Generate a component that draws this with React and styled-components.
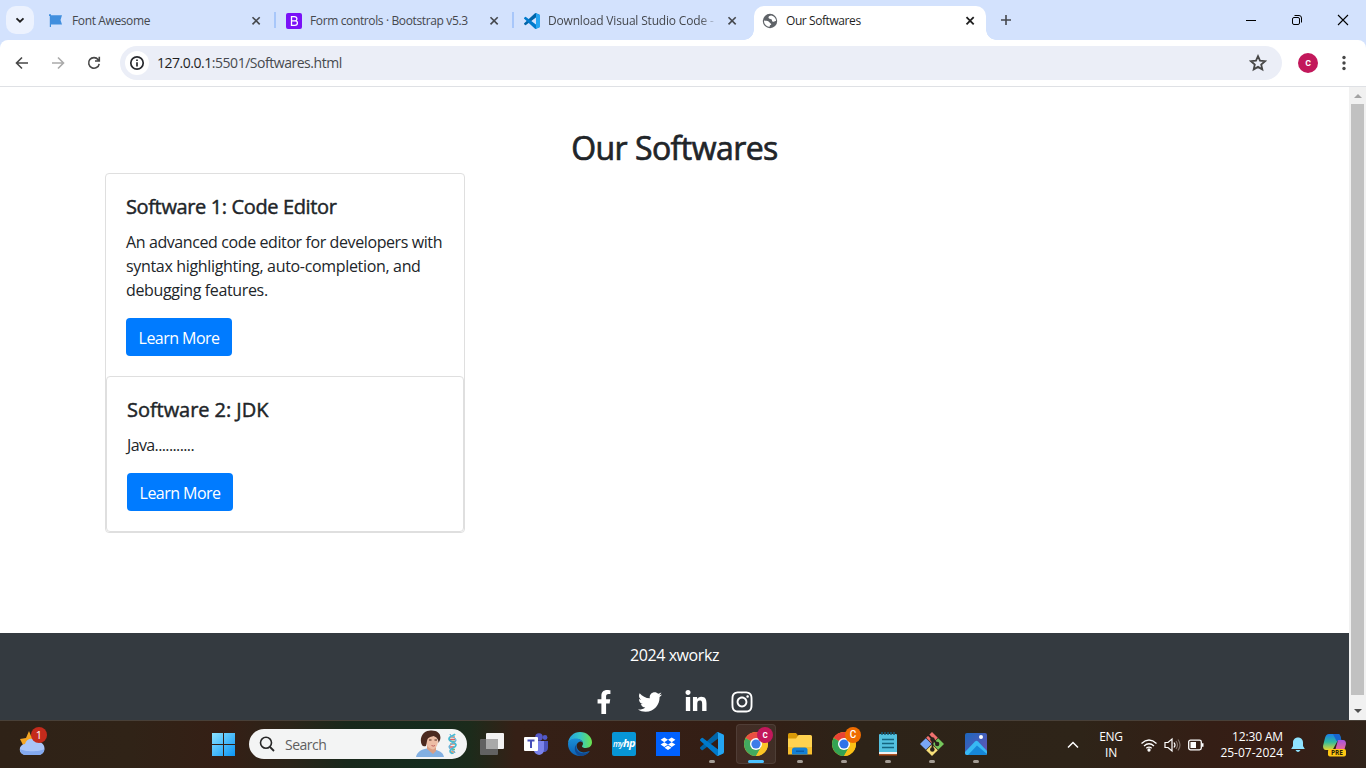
import React from "react";
import styled, { createGlobalStyle, css } from "styled-components";
import { FaFacebookF, FaTwitter, FaLinkedinIn, FaInstagram } from "react-icons/fa";

const Global = createGlobalStyle`
  * { box-sizing: border-box; }
  html, body { margin: 0; padding: 0; }
  body { font-family: "Open Sans", "Noto Sans", sans-serif; background: #fff; overflow: hidden; }
  svg { display: block; flex: none; }
`;

const Screen = styled.div`
  width: 1366px;
  height: 768px;
  display: flex;
  flex-direction: column;
  overflow: hidden;
`;

/* ---------- tab strip ---------- */
const TabStrip = styled.header`
  height: 40px;
  flex: none;
  display: flex;
  background: #d3e2fd;
  padding-left: 6px;
`;
const TabSearch = styled.div`
  width: 28px;
  height: 28px;
  margin: 6px 6px 0 0;
  border-radius: 10px;
  background: #ecf2fe;
  display: grid;
  place-items: center;
`;
const Tab = styled.div`
  position: relative;
  width: 238px;
  height: 40px;
  padding: 1px 14px 0 8px;
  display: flex;
  align-items: center;
`;
const TabIcon = styled.span`
  width: 16px;
  height: 16px;
  margin-right: 8px;
  flex: none;
`;
const TabTitle = styled.span`
  flex: 1;
  font-size: 12px;
  line-height: 16px;
  letter-spacing: ${(p) => p.$track || 0}px;
  color: ${(p) => (p.$active ? "#1f1f1f" : "#45484d")};
  white-space: nowrap;
  ${(p) => p.$fade && css`
    mask-image: linear-gradient(90deg, #000 152px, transparent 170px);
  `}
`;
const TabClose = styled.span`
  width: 16px;
  margin-left: 6px;
`;
const Divider = styled.i`
  position: absolute;
  right: 2px;
  top: 12px;
  width: 2px;
  height: 16px;
  background: #a8c7fa;
`;
const ActiveTab = styled(Tab)`
  width: 232px;
  height: 34px;
  margin-top: 6px;
  padding: 0 8px 5px;
  background: #fff;
  border-radius: 10px 10px 0 0;
  &::before, &::after {
    content: "";
    position: absolute;
    bottom: 0;
    width: 10px;
    height: 10px;
  }
  &::before { left: -10px; background: radial-gradient(circle at 0 0, transparent 9.5px, #fff 10px); }
  &::after { right: -10px; background: radial-gradient(circle at 100% 0, transparent 9.5px, #fff 10px); }
`;
const NewTab = styled.div`
  width: 28px;
  height: 40px;
  margin-left: 6px;
  display: grid;
  place-items: center;
`;
const WindowButtons = styled.div`
  margin-left: auto;
  display: flex;
  > span { width: 46px; height: 40px; display: grid; place-items: center; }
`;

/* ---------- toolbar ---------- */
const ToolbarBack = styled.div`
  height: 47px;
  flex: none;
  background: #d3e2fd;
`;
const Toolbar = styled.div`
  height: 47px;
  background: #fff;
  border-radius: 8px 8px 0 0;
  border-bottom: 1px solid #dfe1e5;
  display: flex;
  align-items: center;
  padding-left: 4px;
`;
const NavButton = styled.span`
  width: 36px;
  height: 36px;
  display: grid;
  place-items: center;
`;
const Omnibox = styled.div`
  width: 1162px;
  height: 34px;
  margin-left: 8px;
  border-radius: 17px;
  background: #ebeef7;
  display: flex;
  align-items: center;
  padding: 0 15px 0 5px;
`;
const SiteInfo = styled.span`
  width: 24px;
  height: 24px;
  border-radius: 50%;
  background: #fff;
  display: grid;
  place-items: center;
  margin-right: 8px;
`;
const Url = styled.span`
  flex: 1;
  font-size: 14px;
  line-height: 20px;
  letter-spacing: -0.47px;
  color: #474a4f;
  b { font-weight: 400; color: #1f1f1f; }
`;
const Profile = styled.span`
  width: 20px;
  height: 20px;
  margin: 0 16px;
  border-radius: 50%;
  background: #c2185b;
  color: #fff;
  font: 500 11px/19px Roboto, sans-serif;
  text-align: center;
`;

/* ---------- page ---------- */
const Viewport = styled.div`
  height: 633px;
  flex: none;
  display: flex;
`;
const Page = styled.main`
  width: 1349px;
  height: 633px;
  display: flex;
  flex-direction: column;
  color: #212529;
`;
const Content = styled.section`
  height: 546px;
  padding: 40px 105px 0;
`;
const Heading = styled.h2`
  margin: 0 0 8px;
  height: 38px;
  font-size: 32px;
  line-height: 41px;
  font-weight: 400;
  -webkit-text-stroke: 0.7px currentColor;
  letter-spacing: -0.55px;
  text-align: center;
`;
const Card = styled.article`
  width: ${(p) => p.$width};
  border: 1px solid #dfdfdf;
  border-radius: 4px;
  background: #fff;
`;
const CardBody = styled.div`
  padding: 20px;
`;
const CardTitle = styled.h5`
  margin: 0 0 12px;
  font-size: 20px;
  line-height: 25px;
  height: 24px;
  font-weight: 400;
  -webkit-text-stroke: 0.45px currentColor;
  letter-spacing: ${(p) => p.$track}px;
  white-space: nowrap;
`;
const CardText = styled.p`
  margin: 0 0 16px;
  font-size: 16px;
  line-height: 24px;
`;
const Line = styled.span`
  display: block;
  white-space: nowrap;
  letter-spacing: ${(p) => p.$track}px;
`;
const Button = styled.a`
  display: flex;
  align-items: center;
  justify-content: center;
  width: 106px;
  height: 38px;
  padding-top: 1px;
  border-radius: 4px;
  background: #007bff;
  color: #fff;
  font-size: 16px;
  letter-spacing: -0.55px;
  white-space: nowrap;
`;
const Footer = styled.footer`
  height: 87px;
  background: #343a40;
  color: #fff;
  text-align: center;
  font-size: 16px;
  line-height: 24px;
  letter-spacing: -0.42px;
  padding-top: 10px;
`;
const Socials = styled.div`
  display: flex;
  justify-content: center;
  align-items: center;
  gap: 22px;
  height: 24px;
  margin: 23px 4px 0 0;
`;
const Scrollbar = styled.aside`
  width: 17px;
  background: #f1f1f1;
  display: flex;
  flex-direction: column;
  align-items: center;
  justify-content: space-between;
  padding: 7px 0;
`;
const Thumb = styled.i`
  width: 13px;
  height: 591px;
  margin: 1px 0 9px;
  background: #c1c1c1;
`;

/* ---------- taskbar ---------- */
const Taskbar = styled.nav`
  height: 48px;
  flex: none;
  display: flex;
  align-items: center;
  border-top: 1px solid #484038;
  background: linear-gradient(90deg, #2f2217 0, #302317 130px, #351f15 225px, #2b2419 290px, #18281b 350px, #152c1e 430px, #1c2b1b 470px, #352016 515px, #341e15 740px, #2d2318 850px, #2e2418 1080px, #341e15 1210px, #371d15 1270px, #30231a 1366px);
`;
const Weather = styled.div`
  position: relative;
  width: 48px;
  height: 47px;
  margin-right: 153px;
  padding: 10px 0 0 19px;
`;
const Badge = styled.span`
  position: absolute;
  left: 31px;
  top: 6px;
  width: 16px;
  height: 16px;
  border-radius: 50%;
  background: #c42b1c;
  color: #fff;
  font-size: 11px;
  line-height: 15px;
  text-align: center;
`;
const TaskButton = styled.div`
  position: relative;
  width: 44px;
  height: 47px;
  padding-bottom: 1px;
  flex: none;
  display: grid;
  place-items: center;
`;
const Highlight = styled.i`
  position: absolute;
  inset: 3px 2px 4px;
  border-radius: 4px;
  background: #ffffff12;
  border: 1px solid #ffffff14;
`;
const Indicator = styled.i`
  position: absolute;
  bottom: 5px;
  left: 50%;
  transform: translateX(-50%);
  width: ${(p) => (p.$current ? 16 : 6)}px;
  height: 3px;
  border-radius: 2px;
  background: ${(p) => (p.$current ? "#4cc2ff" : "#a39c94")};
`;
const ProfileDot = styled.span`
  position: absolute;
  left: 23px;
  top: 6px;
  width: 16px;
  height: 16px;
  border-radius: 50%;
  background: ${(p) => p.$color};
  color: #fff;
  font: 500 10px/15px Roboto, sans-serif;
  text-align: center;
`;
const SearchBox = styled.div`
  width: 218px;
  height: 30px;
  margin: 0 3px 1px 4px;
  border-radius: 15px;
  background: #f3f4f4;
  display: flex;
  align-items: center;
  padding: 0 7px 0 10px;
  color: #5f5f5f;
  font-size: 14px;
  letter-spacing: -0.5px;
  span { flex: 1; margin-left: 10px; }
`;
const Tray = styled.div`
  margin-left: auto;
  height: 47px;
  display: flex;
  align-items: center;
  color: #fff;
  font-size: 12px;
  line-height: 16px;
`;
const Language = styled.div`
  width: 40px;
  text-align: center;
  letter-spacing: -0.3px;
  margin: 1px 9px 0 12px;
`;
const Clock = styled.div`
  width: 79px;
  margin-right: 8px;
  text-align: right;
  letter-spacing: 0;
  white-space: nowrap;
  span { letter-spacing: -0.15px; }
`;
const Copilot = styled.div`
  width: 26px;
  height: 26px;
  margin: 0 18px 0 17px;
`;

/* ---------- drawings ---------- */
const Cross = ({ color = "#45484d", w = 1.6 }) => (
  <svg width="16" height="16" viewBox="0 0 16 16">
    <path d="M4.5 4.2l7.2 7.2M11.7 4.2l-7.2 7.2" stroke={color} strokeWidth={w} />
  </svg>
);
const VsCode = ({ size }) => (
  <svg width={size} height={size} viewBox="0 0 100 100">
    <path d="M96.5 10.8L75.9.9a6.2 6.2 0 0 0-7.1 1.2L1.3 63.6a4.2 4.2 0 0 0 0 6.2l5.5 5a4.2 4.2 0 0 0 5.3.2L93.4 13.4c2.7-2 6.6-.1 6.600 3.300v-.3a6.250 6.250 0 0 0-3.500-5.600z" fill="#0065a9" />
    <path d="M96.500 89.200l-20.600 9.900a6.200 6.200 0 0 1-7.100-1.200L1.300 36.400a4.200 4.200 0 0 1 0-6.200l5.500-5a4.200 4.200 0 0 1 5.300-.2l81.300 61.600c2.700 2 6.600.1 6.600-3.300v.3a6.250 6.250 0 0 1-3.500 5.600z" fill="#007acc" />
    <path d="M75.900 99.100a6.200 6.200 0 0 1-7.100-1.200c2.300 2.300 6.200.7 6.200-2.600V4.700c0-3.300-3.900-4.900-6.200-2.600a6.200 6.200 0 0 1 7.100-1.200l20.600 9.900a6.250 6.250 0 0 1 3.500 5.600v67.200c0 2.400-1.400 4.600-3.500 5.600z" fill="#24a5f2" />
  </svg>
);
const Flag = () => (
  <svg width="16" height="16" viewBox="0 0 16 16">
    <path d="M1 1.300h2v1h11l-1.500 4.700 1.500 4.500H3v2.500H1.800V3H1z" fill="#418fde" />
  </svg>
);
const BootstrapIcon = () => (
  <svg width="16" height="16" viewBox="0 0 16 16">
    <rect width="16" height="16" rx="2" fill="#7a11f7" />
    <path d="M5.500 3.700v8.600h3.300c1.700 0 2.600-.9 2.600-2.400 0-1.300-.9-2.100-2.300-2.100 1.200-.1 1.800-.9 1.800-1.900 0-1.400-.9-2.200-2.500-2.200zM5.500 7.800h3.600" fill="none" stroke="#fff" strokeWidth="1.300" />
  </svg>
);
const Globe = () => (
  <svg width="16" height="16" viewBox="0 0 16 16">
    <circle cx="8" cy="8" r="7.200" fill="#5f6368" />
    <path d="M9.300 2.400C8 2.300 6.700 3 6.500 4.300c-.1 1.200.9 1.500 1.900 1.700 1.200.2 1.700.8 1.600 1.800-.2 1 1.300 1.100 2.300.6 1-.4 1.500-.1 1.800-.9-.2-2.400-1.800-4.500-4.800-5.100zM2 7.600c1.600.5 3.300 0 4.600.8 1 .7 1 1.600 2 2 .9.300.8 1.400-.1 1.700-.8.3-.6 1.300-1.100 1.800C4.200 13.600 1.900 11 2 7.600z" fill="#fff" />
  </svg>
);
const Chrome = () => (
  <svg width="24" height="24" viewBox="0 0 24 24">
    <circle cx="12" cy="12" r="12" fill="#fbc116" />
    <path d="M12 12L1.610 6A12 12 0 0 1 22.390 6H12z" fill="#e94235" />
    <path d="M12 12L1.610 6A12 12 0 0 0 12 24l5.200-9z" fill="#34a353" />
    <path d="M12 6h10.390A12 12 0 0 1 12 24l5.200-9z" fill="#fbc116" />
    <circle cx="12" cy="12" r="6" fill="#fff" />
    <circle cx="12" cy="12" r="4.600" fill="#2f73e8" />
  </svg>
);
const Edge = () => (
  <svg width="24" height="24" viewBox="0 0 24 24">
    <defs>
      <linearGradient id="edgeTop"><stop offset="0" stopColor="#229ee0" /><stop offset=".5" stopColor="#36c7c5" /><stop offset="1" stopColor="#6be34b" /></linearGradient>
      <linearGradient id="edgeLow" x2="0" y2="1"><stop stopColor="#1b8fd6" /><stop offset="1" stopColor="#0b61b5" /></linearGradient>
    </defs>
    <path d="M0 11C.6 4.800 5.700 0 12 0c7 0 12 5 12 10.300 0 3.700-2.800 5.700-6 5.700-2.400 0-4-.8-4-1.600 0-.6 1-1 1-2.800C15 8.900 12 7 8.500 7 4.500 7 1.200 8.600 0 11z" fill="url(#edgeTop)" />
    <path d="M0 12C0 8.700 3.500 6.500 7.800 6.500c4 0 7.200 2.200 7.200 5 0-1.700-2-2.500-3.500-1.800C8.800 10.800 8 13.400 9 16c1.200 3 4.500 5 8.500 4.300 2-.4 3.600-1.200 4.300-1.200C20 22 16.300 24 12 24 5.200 24 0 18.600 0 12z" fill="url(#edgeLow)" />
    <path d="M8.700 12c-1.800 4 .5 9 6.300 9.300 3 .1 5.700-1.400 6.900-2.400C19.800 22 16.500 24 12.500 24 7.500 23.500 4.700 16 8.700 12z" fill="#12488f" />
  </svg>
);
const WindowsLogo = () => (
  <svg width="24" height="24" viewBox="0 0 24 24">
    <defs><linearGradient id="win" gradientUnits="userSpaceOnUse" x1="1" y1="1" x2="24" y2="24"><stop stopColor="#8be2ff" /><stop offset="1" stopColor="#0a95f5" /></linearGradient></defs>
    <path d="M1 1h11v11H1zM13 1h11v11H13zM1 13h11v11H1zM13 13h11v11H13z" fill="url(#win)" />
  </svg>
);
const TaskView = () => (
  <svg width="24" height="24" viewBox="0 0 24 24">
    <rect x="6" y="1" width="18" height="16" rx="1" fill="#f2f2f2" />
    <rect y="7" width="18" height="16" rx="1" fill="#626262" />
    <path d="M6 7h12v10H6z" fill="#a9a9a9" />
  </svg>
);
const Teams = () => (
  <svg width="24" height="24" viewBox="0 0 24 24">
    <circle cx="15" cy="5" r="3.800" fill="#5558c8" />
    <circle cx="21" cy="5.500" r="2.400" fill="#5059c9" />
    <path d="M16 9h8v7a4 4 0 0 1-6 3.500z" fill="#4b53bc" />
    <path d="M10 9h10v8c0 8-9 7-10 2z" fill="#7b83eb" />
    <rect y="5" width="14" height="14" rx="1" fill="#fff" />
    <path d="M3.500 8.500h7M7 8.500V16" stroke="#464eb8" strokeWidth="2" />
  </svg>
);
const HpTile = styled.span`
  width: 24px;
  height: 24px;
  border-radius: 2px;
  background: #0796d6;
  color: #fff;
  font: italic 600 8px/21px "Open Sans", sans-serif;
  letter-spacing: -0.6px;
  text-align: center;
  b { font-size: 11px; font-weight: 700; }
`;
const Dropbox = () => (
  <svg width="24" height="24" viewBox="0 0 24 24">
    <path fill="#0061fe" d="M0 0h24v24H0z" />
    <path fill="#fff" d="M8.300 5.500l3.700 2.300-3.700 2.400-3.700-2.400zM15.700 5.500l3.700 2.300-3.700 2.400L12 7.800zM8.300 10.200l3.700 2.400-3.700 2.300-3.700-2.300zM15.700 10.200l3.700 2.400-3.700 2.300-3.700-2.300zM12 13.500l3.500 2.300-3.500 2.300-3.500-2.300z" />
  </svg>
);
const Folder = () => (
  <svg width="24" height="24" viewBox="0 0 24 24">
    <path d="M0 2.500q0-1.500 1.500-1.500H8l2 2.500v5H0z" fill="#d99a08" />
    <path d="M0 6.500h8L10.500 3H22.500Q24 3 24 4.500V22H0z" fill="#ffd250" />
    <path d="M0 15h24v7.500H0z" fill="#f8bf2e" />
    <path d="M4 22.500V18q0-2.500 2.500-2.500h10.500q2.500 0 2.500 2.500v4.500z" fill="#1480d4" />
    <path d="M8 18.500h8v1.500H8z" fill="#0b5da8" />
  </svg>
);
const Notepad = () => (
  <svg width="24" height="24" viewBox="0 0 24 24">
    <rect x="3" y="2" width="18" height="20" rx="1" fill="#53c1df" />
    <path d="M3 20h18v2q0 1-1 1H4q-1 0-1-1z" fill="#f1f1f1" />
    <path d="M3 22.800h18" stroke="#aa4a16" strokeWidth="1.500" />
    <path d="M6 0v3M9 0v3M12 0v3M15 0v3M18 0v3" stroke="#155b78" strokeWidth="1.500" />
    <path d="M6 7.500h12M6 11.500h12M6 15.500h12" stroke="#146580" strokeWidth="1.700" />
  </svg>
);
const Git = () => (
  <svg width="24" height="24" viewBox="0 0 24 24">
    <path d="M12 0l5.800 5.800L12 11.600 6.200 5.800z" fill="#f1716f" />
    <path d="M5.800 6.200L11.600 12l-5.800 5.800L0 12z" fill="#79a6f5" />
    <path d="M18.200 6.200L24 12l-5.800 5.800-5.800-5.800z" fill="#75c65b" />
    <path d="M12 12.400l5.800 5.800L12 24l-5.800-5.800z" fill="#f8df79" />
    <path d="M8 2.500l4.500 4.500v11M12.500 7l5 5" stroke="#29221c" strokeWidth="1.800" fill="none" />
    <circle cx="12.500" cy="7.500" r="2.200" fill="#29221c" /><circle cx="17.200" cy="12" r="2.200" fill="#29221c" /><circle cx="12.300" cy="17.500" r="2.300" fill="#29221c" />
  </svg>
);
const Photos = () => (
  <svg width="24" height="24" viewBox="0 0 24 24">
    <defs><linearGradient id="pic" x2="1" y2="1"><stop stopColor="#1c67bd" /><stop offset="1" stopColor="#6954b5" /></linearGradient></defs>
    <rect x="1" y="1" width="22" height="22" rx="2" fill="url(#pic)" />
    <path d="M1 20L11 9.500q1.500-1.300 3 0L23 19v2q0 2-2 2H3q-2 0-2-2z" fill="#37b9f4" />
    <path d="M4 23l9-9.500 10 8.500-1 1z" fill="#1687d8" />
    <circle cx="17" cy="5" r="2" fill="#fff" />
  </svg>
);
const Person = () => (
  <svg width="46" height="28" viewBox="0 0 46 28">
    <path d="M2 27c1-5 5-7.500 11-8.500l6 1c6 .8 10 2.500 11 7.500z" fill="#82b0e2" />
    <path d="M13 15h9v6l-3 3-6-5z" fill="#d99e84" />
    <path d="M12 6q6-4 11 1l1 5q-1 6-5 7.500-5-1-7-6z" fill="#edbda5" />
    <path d="M8 15C5 10 8 1 15 .800 23-.5 28 4 26 10l-1.500 3c0-4-2-6-5-7-4 1-6 2-6.500 5l-1 5q-3 1-4-1z" fill="#4b291f" />
    <path d="M15 10h2.500M20.500 10H23" stroke="#4b291f" /><path d="M17.500 15.500q2 1.200 3.500 0" stroke="#bd6060" fill="none" />
    <path d="M36 7h5M36 14h6M36 22h5" stroke="#f1874f" strokeWidth="1.400" />
    <path d="M35 9.500h6M35 17h5" stroke="#e15b60" strokeWidth="1.300" />
    <path d="M36 19.500h5M37 11.500h4" stroke="#75bd72" strokeWidth="1.300" />
    <path d="M41 4c-1 2-6 2-6 5s7 3 7 6-6 3-6 6 3 2 3 3" fill="none" stroke="#45b9d1" strokeWidth="1.700" />
    <path d="M36 4c0 3 6 3 6 6s-7 4-7 7 6 3 6 6" fill="none" stroke="#62b4dc" strokeWidth="1.200" />
  </svg>
);

const tabs = [
  { title: "Font Awesome", icon: <Flag />, track: -0.38, divider: true },
  { title: "Form controls · Bootstrap v5.3", icon: <BootstrapIcon />, track: -0.37, divider: true },
  { title: "Download Visual Studio Code -", icon: <VsCode size={16} />, track: -0.18, fade: true },
];

const apps = [
  { id: "views", icon: <TaskView /> },
  { id: "teams", icon: <Teams /> },
  { id: "edge", icon: <Edge /> },
  { id: "hp", icon: <HpTile>my<b>hp</b></HpTile> },
  { id: "dropbox", icon: <Dropbox /> },
  { id: "code", icon: <VsCode size={24} />, open: true },
  { id: "chrome", icon: <Chrome />, open: true, current: true, dot: "#c2185b", letter: "c" },
  { id: "files", icon: <Folder />, open: true },
  { id: "chrome2", icon: <Chrome />, open: true, dot: "#ef6c00", letter: "C" },
  { id: "notes", icon: <Notepad />, open: true },
  { id: "git", icon: <Git />, open: true },
  { id: "photos", icon: <Photos />, open: true },
];

function BrowserChrome() {
  return (
    <>
      <TabStrip>
        <TabSearch>
          <svg width="12" height="12" viewBox="0 0 12 12"><path d="M2.500 4.300L6 7.700l3.500-3.400" fill="none" stroke="#1f1f1f" strokeWidth="1.800" /></svg>
        </TabSearch>
        {tabs.map((t, i) => (
          <Tab key={i}>
            <TabIcon>{t.icon}</TabIcon>
            <TabTitle $track={t.track} $fade={t.fade}>{t.title}</TabTitle>
            <TabClose><Cross /></TabClose>
            {t.divider && <Divider />}
          </Tab>
        ))}
        <ActiveTab>
          <TabIcon><Globe /></TabIcon>
          <TabTitle $active $track={-0.42}>Our Softwares</TabTitle>
          <TabClose><Cross color="#1f1f1f" w={1.8} /></TabClose>
        </ActiveTab>
        <NewTab>
          <svg width="12" height="12" viewBox="0 0 12 12"><path d="M6 1v10M1 6h10" stroke="#45484d" strokeWidth="1.600" /></svg>
        </NewTab>
        <WindowButtons>
          <span><svg width="10" height="10" viewBox="0 0 10 10"><path d="M0 5.500h10" stroke="#000" /></svg></span>
          <span><svg width="12" height="12" viewBox="0 0 12 12" fill="none" stroke="#000"><rect x="1.500" y="3.500" width="7" height="7" rx="1.500" /><path d="M3.500 1.500H8q2.500 0 2.500 2.500v4.500" /></svg></span>
          <span><svg width="12" height="12" viewBox="0 0 12 12"><path d="M1 1l10 10M11 1L1 11" stroke="#000" strokeWidth="1.100" /></svg></span>
        </WindowButtons>
      </TabStrip>
      <ToolbarBack>
        <Toolbar>
          <NavButton><svg width="16" height="16" viewBox="0 0 16 16"><path d="M14 8H3M8 2.500L2.500 8 8 13.500" fill="none" stroke="#474747" strokeWidth="1.600" /></svg></NavButton>
          <NavButton><svg width="16" height="16" viewBox="0 0 16 16"><path d="M2 8h11M8 2.500L13.500 8 8 13.500" fill="none" stroke="#aaa" strokeWidth="1.600" /></svg></NavButton>
          <NavButton><svg width="16" height="16" viewBox="0 0 16 16"><path d="M13.200 8.800A5.300 5.300 0 1 1 12.200 4.700L13 5.800M13.300 1.800V6H9" fill="none" stroke="#474747" strokeWidth="1.600" /></svg></NavButton>
          <Omnibox>
            <SiteInfo><svg width="16" height="16" viewBox="0 0 16 16"><circle cx="8" cy="8" r="6.200" fill="none" stroke="#27292d" strokeWidth="1.700" /><path d="M8 7.200V11.400M8 4.500V6" stroke="#27292d" strokeWidth="1.700" /></svg></SiteInfo>
            <Url><b>127.0.0.1</b>:5501/Softwares.html</Url>
            <svg width="18" height="18" viewBox="0 0 18 18"><path d="M9 2.200l2 4.500 5 .5-3.800 3.300 1.100 4.900L9 12.900l-4.300 2.500 1.100-4.900L2 7.200l5-.5z" fill="none" stroke="#474747" strokeWidth="1.800" /></svg>
          </Omnibox>
          <Profile>c</Profile>
          <svg width="20" height="20" viewBox="0 0 20 20" fill="#474747"><circle cx="10" cy="4.500" r="1.700" /><circle cx="10" cy="10" r="1.700" /><circle cx="10" cy="15.500" r="1.700" /></svg>
        </Toolbar>
      </ToolbarBack>
    </>
  );
}

export default function App() {
  return (
    <Screen>
      <Global />
      <BrowserChrome />
      <Viewport>
        <Page>
          <Content>
            <Heading>Our Softwares</Heading>
            <Card $width="360px">
              <CardBody>
                <CardTitle $track={-0.37}>Software 1: Code Editor</CardTitle>
                <CardText>
                  <Line $track={-0.4}>An advanced code editor for developers with</Line>
                  <Line $track={-0.33}>syntax highlighting, auto-completion, and</Line>
                  <Line $track={-0.36}>debugging features.</Line>
                </CardText>
                <Button>Learn More</Button>
              </CardBody>
              <Card $width="100%">
                <CardBody>
                  <CardTitle $track={-0.05}>Software 2: JDK</CardTitle>
                  <CardText><Line $track={-0.62}>Java...........</Line></CardText>
                  <Button>Learn More</Button>
                </CardBody>
              </Card>
            </Card>
          </Content>
          <Footer>
            2024 xworkz
            <Socials>
              <FaFacebookF size={24} />
              <FaTwitter size={24} />
              <FaLinkedinIn size={24} />
              <FaInstagram size={24} />
            </Socials>
          </Footer>
        </Page>
        <Scrollbar>
          <svg width="8" height="4" viewBox="0 0 8 4"><path d="M0 4l4-4 4 4z" fill="#a3a3a3" /></svg>
          <Thumb />
          <svg width="8" height="4" viewBox="0 0 8 4"><path d="M0 0l4 4 4-4z" fill="#505050" /></svg>
        </Scrollbar>
      </Viewport>
      <Taskbar>
        <Weather>
          <svg width="26" height="25" viewBox="0 0 26 25">
            <path d="M10 0l2 5 5 2-1 9H5l-4-8 6-1z" fill="#f5a623" />
            <path d="M6.500 24a5.500 5.500 0 0 1-.5-11c1.500-6 9-7 12-2 4-.5 7.500 2 7.500 6.500 0 4-3 6.500-6 6.500z" fill="#a9c5f8" />
            <path d="M1.200 18c4 3 20 3 24 0 0 3.500-2.500 6-5.500 6H6.500c-3 0-5.500-3-5.300-6z" fill="#83a9ef" />
          </svg>
          <Badge>1</Badge>
        </Weather>
        <TaskButton><WindowsLogo /></TaskButton>
        <SearchBox>
          <svg width="16" height="16" viewBox="0 0 16 16"><circle cx="7" cy="6.800" r="5.500" fill="none" stroke="#272727" strokeWidth="1.600" /><path d="M11 11l4 4" stroke="#272727" strokeWidth="1.800" /></svg>
          <span>Search</span>
          <Person />
        </SearchBox>
        {apps.map((a) => (
          <TaskButton key={a.id}>
            {a.current && <Highlight />}
            {a.icon}
            {a.dot && <ProfileDot $color={a.dot}>{a.letter}</ProfileDot>}
            {a.open && <Indicator $current={a.current} />}
          </TaskButton>
        ))}
        <Tray>
          <svg width="12" height="12" viewBox="0 0 12 12"><path d="M1 8.500l5-5 5 5" fill="none" stroke="#fff" strokeWidth="1.500" /></svg>
          <Language>ENG<br />IN</Language>
          <svg width="18" height="16" viewBox="0 0 18 16" fill="none" stroke="#fff" strokeWidth="1.300"><path d="M1.500 6.500q7.500-7 15 0M4 9q5-4.500 10 0M6.300 11.300q2.700-2.300 5.400 0" /><circle cx="9" cy="13" r="1" fill="#fff" /></svg>
          <svg width="30" height="16" viewBox="-6 0 30 16" fill="none" stroke="#fff" strokeWidth="1.200"><path d="M1 5.500h3l4-3.500v12l-4-3.500H1z" /><path d="M10 5.500q2 2.500 0 5" /><path d="M12 4q3 4 0 8M14 2.500q4 5.500 0 11" stroke="#7d7068" /></svg>
          <svg width="16" height="12" viewBox="0 0 16 12"><rect x=".7" y="1.200" width="12.600" height="9.600" rx="1.800" fill="none" stroke="#fff" strokeWidth="1.300" /><path d="M2.500 3h5.500v6H2.500zM14 4.200h1.500v3.600H14z" fill="#fff" /></svg>
          <Clock><span>12:30 AM</span><br />25-07-2024</Clock>
          <svg width="14" height="16" viewBox="0 0 14 16"><path d="M7 .500c3 0 5 2.200 5 5V9l1.800 3H.200L2 9V5.500c0-2.800 2-5 5-5zM4.500 13h5q-2.500 4-5 0z" fill="#8fe3ff" /></svg>
          <Copilot>
            <svg width="26" height="26" viewBox="0 0 26 26">
              <defs>
                <linearGradient id="cpA" x2="0" y2="1"><stop stopColor="#1a7fe8" /><stop offset=".5" stopColor="#2fb9a0" /><stop offset="1" stopColor="#e7d62f" /></linearGradient>
                <linearGradient id="cpB" x2="0" y2="1"><stop stopColor="#a454e0" /><stop offset="1" stopColor="#f56b8d" /></linearGradient>
              </defs>
              <path d="M7 2h9q2 0 2.500 3l1 4h-4l-5 9H4q-3 0-3-4l2-8q1-4 4-4z" fill="url(#cpA)" />
              <path d="M11 2h5q2 0 2.500 3l1 4h-5z" fill="#1765cf" />
              <path d="M16 8h5q3 0 3 4l-2 7h-9z" fill="url(#cpB)" />
              <rect x="6" y="17" width="18" height="7.500" rx="2" fill="#ffc814" />
              <text x="15" y="23.200" textAnchor="middle" fontFamily="Open Sans, sans-serif" fontWeight="700" fontSize="6.500" fill="#2a2108">PRE</text>
            </svg>
          </Copilot>
        </Tray>
      </Taskbar>
    </Screen>
  );
}
